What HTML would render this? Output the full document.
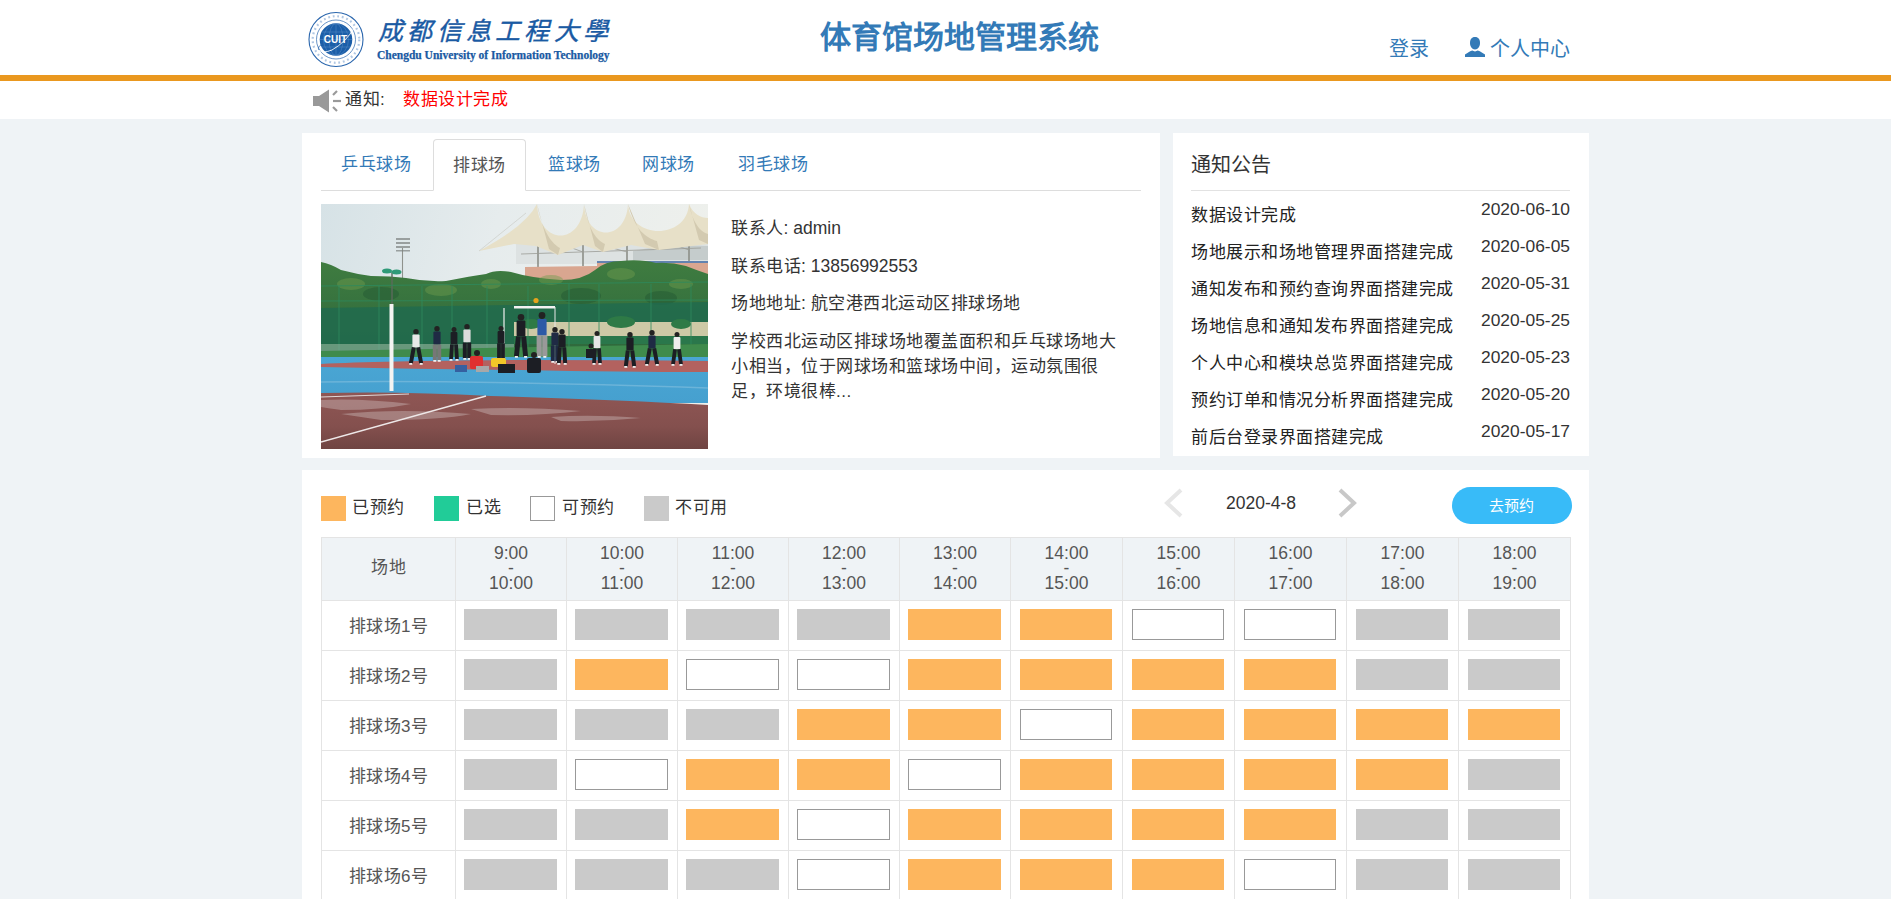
<!DOCTYPE html>
<html lang="zh-CN"><head><meta charset="utf-8">
<style>
*{margin:0;padding:0;box-sizing:border-box}
html,body{width:1891px;height:899px;overflow:hidden}
body{background:#eff3f6;font-family:"Liberation Sans",sans-serif;color:#333;position:relative}
.abs{position:absolute}
.t{position:absolute;white-space:nowrap;line-height:1}
#hdr{left:0;top:0;width:1891px;height:75px;background:#fff}
#oline{left:0;top:75px;width:1891px;height:6px;background:#ea981f}
#notice{left:0;top:81px;width:1891px;height:38px;background:#fff}
.panel{background:#fff}
.tab{position:absolute;top:139px;height:52px;color:#337ab7;font-size:17px;letter-spacing:.5px;line-height:1;white-space:nowrap}
.tab span{position:absolute;top:17px}
.lat{letter-spacing:0;font-size:17.5px}
.act{border:1px solid #ddd;border-bottom-color:#fff;border-radius:4px 4px 0 0;background:#fff;color:#555}
.news{font-size:17px;letter-spacing:.5px;color:#222}
.date{font-size:17.4px;color:#333;text-align:right;width:120px}
table{position:absolute;left:321px;top:537px;border-collapse:collapse;table-layout:fixed}
td,th{border:1px solid #e4e4e4;text-align:center;padding:0;color:#555;font-weight:normal;vertical-align:middle}
th{background:#eff3f6;height:63px;font-size:17.5px;line-height:15px;padding-bottom:2px}
th.nm0{font-size:17px;letter-spacing:.5px;padding-bottom:4px}
td{height:50px;font-size:17px;letter-spacing:.5px}
td.nm{padding-bottom:3px}
.b{display:block;margin:0 0 0 9px;width:92px;height:31px;position:relative;top:-1px}
.c111 .b{margin-left:8px;width:93px}
.G{background:#cacaca}
.O{background:#fdb65e}
.W{background:#fff;border:1px solid #999}
.leg{position:absolute;top:496px;width:25px;height:25px}
.lt{position:absolute;top:499px;font-size:17px;letter-spacing:.5px;line-height:1;color:#333;white-space:nowrap}
</style></head><body>
<div id="hdr" class="abs"></div>
<div id="oline" class="abs"></div>
<div id="notice" class="abs"></div>

<!-- logo -->
<svg class="abs" style="left:306px;top:10px" width="60" height="60" viewBox="0 0 60 60">
<circle cx="30" cy="29.5" r="27" fill="#fff" stroke="#2a66ad" stroke-width="1.1"/>
<circle cx="30" cy="29.5" r="23.3" fill="none" stroke="#4f82c0" stroke-width="2.2" stroke-dasharray="1.8 2.8" opacity="0.45"/>
<circle cx="30" cy="29.5" r="19.5" fill="none" stroke="#2a66ad" stroke-width="0.7"/>
<circle cx="30" cy="29.5" r="16.3" fill="#1b5ea8"/>
<g stroke="#5d8fca" stroke-width="0.45" fill="none"><ellipse cx="30" cy="29.5" rx="7" ry="16"/><ellipse cx="30" cy="29.5" rx="12.5" ry="16"/><line x1="14" y1="29.5" x2="46" y2="29.5"/><line x1="15.5" y1="22" x2="44.5" y2="22"/><line x1="15.5" y1="37" x2="44.5" y2="37"/><line x1="30" y1="13.5" x2="30" y2="45.5"/></g>
<path d="M13 40 Q16 44 26 40 Q40 32 48 18" stroke="#fff" stroke-width="0.9" fill="none"/><path d="M13 40 Q11 37 16 34" stroke="#2a66ad" stroke-width="0.8" fill="none"/>
<text x="29.5" y="33.3" text-anchor="middle" font-family="Liberation Sans" font-weight="bold" font-size="10" fill="#fff">CUIT</text>
</svg>
<div class="t" style="left:378px;top:19px;font-family:'Liberation Serif',serif;font-weight:normal;font-size:25px;color:#1a5aa3;letter-spacing:4.3px;font-style:italic;-webkit-text-stroke:0.4px #1a5aa3">成都信息工程大學</div>
<div class="t" id="eng" style="left:377px;top:50px;font-family:'Liberation Serif',serif;font-weight:bold;font-size:11.5px;color:#1a5aa3;-webkit-text-stroke:0.25px #1a5aa3">Chengdu University of Information Technology</div>

<div class="t" style="left:820px;top:22px;font-size:31px;font-weight:bold;color:#337ab7">体育馆场地管理系统</div>
<div class="t" style="left:1389px;top:39px;font-size:20px;color:#337ab7">登录</div>
<svg class="abs" style="left:1465px;top:37px" width="20" height="20" viewBox="0 0 20 20"><path d="M10 0 C13.5 0 15 2.5 15 6 C15 9.5 13 12.5 10 12.5 C7 12.5 5 9.5 5 6 C5 2.5 6.5 0 10 0Z" fill="#337ab7"/><path d="M0 20 L0 17.6 L5.2 14.3 L7.2 13.6 Q10 15.2 12.8 13.6 L14.8 14.3 L20 17.6 L20 20Z" fill="#337ab7"/></svg>
<div class="t" style="left:1490px;top:39px;font-size:20px;color:#337ab7">个人中心</div>

<!-- notice -->
<svg class="abs" style="left:312px;top:89px" width="30" height="24" viewBox="0 0 30 24"><path d="M1 7 L7 7 L17 0.5 L17 23.5 L7 17 L1 17Z" fill="#999"/><g stroke="#999" stroke-width="2.2"><line x1="21" y1="6" x2="25" y2="2"/><line x1="21" y1="12" x2="29" y2="12"/><line x1="21" y1="18" x2="25" y2="22"/></g></svg>
<div class="t" style="left:345px;top:91px;font-size:17px;letter-spacing:.5px;color:#333">通知:</div>
<div class="t" style="left:403px;top:91px;font-size:17px;letter-spacing:.5px;color:#f00">数据设计完成</div>

<!-- panels -->
<div class="abs panel" style="left:302px;top:133px;width:858px;height:325px"></div>
<div class="abs panel" style="left:1173px;top:133px;width:416px;height:323px"></div>
<div class="abs panel" style="left:302px;top:470px;width:1287px;height:429px"></div>

<!-- tabs -->
<div class="abs" style="left:321px;top:190px;width:820px;height:1px;background:#ddd"></div>
<div class="tab" style="left:341px"><span>乒乓球场</span></div>
<div class="tab act" style="left:433px;width:93px"><span style="left:19px">排球场</span></div>
<div class="tab" style="left:548px"><span>篮球场</span></div>
<div class="tab" style="left:642px"><span>网球场</span></div>
<div class="tab" style="left:738px"><span>羽毛球场</span></div>

<div class="abs" style="left:321px;top:204px;width:387px;height:245px;overflow:hidden"><svg width="387" height="245" viewBox="0 0 387 245">
<defs>
<linearGradient id="sky" x1="0" y1="0" x2="1" y2="0.2"><stop offset="0" stop-color="#d6e2e6"/><stop offset="0.45" stop-color="#e6eced"/><stop offset="1" stop-color="#eef0ec"/></linearGradient>
<linearGradient id="trk" x1="0" y1="0" x2="0" y2="1"><stop offset="0" stop-color="#8f5654"/><stop offset="0.6" stop-color="#84504e"/><stop offset="1" stop-color="#6f4442"/></linearGradient>
<linearGradient id="crt" x1="0" y1="0" x2="0" y2="1"><stop offset="0" stop-color="#4aa6d4"/><stop offset="1" stop-color="#46a0cf"/></linearGradient>
<linearGradient id="tree" x1="0" y1="0" x2="0" y2="1"><stop offset="0" stop-color="#3f7c40"/><stop offset="1" stop-color="#2c663c"/></linearGradient>
</defs>
<rect width="387" height="245" fill="url(#sky)"/>
<!-- under-canopy structure -->
<rect x="195" y="36" width="192" height="24" fill="#dde2e2"/>
<path d="M312 47 Q350 40 387 42 L387 56 L312 56Z" fill="#c5cccc"/>
<g stroke="#8c8f88" stroke-width="1.6"><line x1="217" y1="42" x2="217" y2="68"/><line x1="262" y1="40" x2="262" y2="62"/><line x1="306" y1="36" x2="306" y2="58"/><line x1="368" y1="33" x2="368" y2="59"/></g>
<g stroke="#9a9c96" stroke-width="0.8"><line x1="200" y1="50" x2="380" y2="44"/><line x1="240" y1="40" x2="262" y2="48"/><line x1="284" y1="42" x2="306" y2="48"/><line x1="345" y1="38" x2="368" y2="46"/></g>
<rect x="276" y="57" width="111" height="3" fill="#6283b0"/>
<path d="M204 63 L276 62 L276 59 L387 59 L387 80 L204 80Z" fill="#d9a690"/>
<!-- canopy -->
<path d="M158 47 Q205 22 216 0 C218 42 261 42 263 0 C265 38 305 38 307 0 C309 36 366 36 368 0 C372 10 380 14 387 14 L387 40 L338 46 L310 41 L282 48 L262 41 L237 51 L215 42 L193 40 Z" fill="#e7e0c8"/>
<path d="M216 0 C222 30 232 40 239 44 L237 51 L228 45Z M263 0 C268 28 276 36 284 40 L282 48 L274 42Z M307 0 C314 26 325 34 336 37 L338 46 L324 40Z M368 0 C372 20 380 28 387 30 L387 40 L378 36Z" fill="#d3cab0"/>
<line x1="158" y1="47" x2="205" y2="9" stroke="#c0c0b8" stroke-width="0.5"/>
<!-- floodlight -->
<line x1="81.5" y1="44" x2="81.5" y2="82" stroke="#8f928c" stroke-width="1.1"/>
<g fill="#7d8280" opacity="0.7"><rect x="75" y="34" width="14" height="2"/><rect x="75" y="38" width="14" height="2"/><rect x="75" y="42" width="14" height="2"/><rect x="75" y="46" width="14" height="1.5"/></g>
<!-- trees -->
<path d="M0 58 Q10 60 20 66 Q35 70 50 72 Q70 72 85 74 Q105 78 125 77 Q150 72 165 70 Q175 65 190 68 Q210 74 240 76 Q262 76 274 66 Q284 57 300 57 Q320 55 335 59 Q350 58 365 62 Q375 66 387 70 L387 160 L0 160Z" fill="url(#tree)"/>
<g fill="#6f9c4e" opacity="0.45"><ellipse cx="30" cy="80" rx="14" ry="6"/><ellipse cx="120" cy="86" rx="16" ry="6"/><ellipse cx="230" cy="76" rx="12" ry="5"/><ellipse cx="300" cy="70" rx="14" ry="6"/><ellipse cx="360" cy="80" rx="12" ry="5"/><ellipse cx="170" cy="80" rx="10" ry="5"/></g>
<g fill="#245a34" opacity="0.5"><ellipse cx="60" cy="90" rx="18" ry="7"/><ellipse cx="260" cy="92" rx="20" ry="8"/><ellipse cx="340" cy="94" rx="16" ry="7"/></g>
<!-- lamp -->
<line x1="71" y1="68" x2="71" y2="102" stroke="#5c6a5c" stroke-width="1.4"/>
<ellipse cx="66" cy="67" rx="5" ry="2.5" fill="#2f9a78"/><ellipse cx="75.5" cy="68" rx="5" ry="2.5" fill="#2f9a78"/>
<!-- lower fence dark -->
<path d="M0 104 L387 98 L387 140 L0 140Z" fill="#1f6a4f" opacity="0.8"/>
<rect x="193" y="118" width="194" height="16" fill="#cdc9a6"/>
<g fill="#2e7a46"><ellipse cx="210" cy="120" rx="10" ry="5"/><ellipse cx="300" cy="118" rx="14" ry="6"/><ellipse cx="360" cy="120" rx="10" ry="5"/></g>
<rect x="193" y="132" width="194" height="8" fill="#2a774b"/>
<g stroke="#2d8a5e" stroke-width="0.8">
<line x1="0" y1="82" x2="387" y2="78"/><line x1="0" y1="97" x2="387" y2="96"/>
<line x1="18" y1="82" x2="18" y2="150"/><line x1="58" y1="82" x2="58" y2="150"/><line x1="101" y1="82" x2="101" y2="150"/><line x1="131" y1="82" x2="131" y2="150"/><line x1="166" y1="82" x2="166" y2="150"/><line x1="207" y1="82" x2="207" y2="150"/><line x1="248" y1="80" x2="248" y2="150"/><line x1="278" y1="80" x2="278" y2="150"/><line x1="330" y1="80" x2="330" y2="150"/><line x1="370" y1="80" x2="370" y2="150"/>
</g>
<rect x="0" y="140" width="193" height="8" fill="#8fb8a6" opacity="0.6"/>
<!-- turf -->
<path d="M0 147 L387 140 L387 155 L0 153Z" fill="#3f8b4c"/>
<!-- court -->
<rect x="0" y="153" width="387" height="46" fill="url(#crt)"/>
<path d="M0 160 Q60 157 200 156 Q300 156 387 157 L387 168 Q300 168 200 166 Q100 165 0 163Z" fill="#b3625f"/>
<path d="M0 178 Q150 176 387 184" stroke="#8fc6e2" stroke-width="1.5" fill="none" opacity="0.5"/>
<!-- track -->
<path d="M0 189 Q80 187 170 192 Q300 196 387 201 L387 245 L0 245Z" fill="url(#trk)"/>
<g fill="#dcd2d2" opacity="0.35"><path d="M0 196 Q40 194 90 200 Q60 206 20 206 Q5 204 0 203Z"/><path d="M20 210 Q80 204 150 210 Q120 216 60 216Z"/><path d="M150 205 Q200 202 260 207 Q220 212 170 211Z"/><path d="M230 213 Q270 210 320 214 Q280 218 240 217Z"/></g>
<path d="M0 238 L165 192" stroke="#eee8e8" stroke-width="1.3"/>
<path d="M0 193 L88 190" stroke="#e0d8d8" stroke-width="1"/>
<!-- net -->
<rect x="193" y="102" width="41" height="2.5" fill="#f2f2f2"/>
<line x1="234" y1="103" x2="234" y2="160" stroke="#e8e8e8" stroke-width="1"/>
<line x1="183" y1="104" x2="183" y2="158" stroke="#f0f0f0" stroke-width="1.2"/>
<!-- pole -->
<rect x="68.5" y="100" width="4" height="87" fill="#f4f4f2"/>
<circle cx="95.0" cy="127.7" r="2.7" fill="#222"/><rect x="91.4" y="130.4" width="7.2" height="13.0" rx="1" fill="#e8e8e8"/><path d="M92.8 143.4 L89.8 159.5 M97.2 143.4 L100.2 159.5" stroke="#1c1e24" stroke-width="4.0" fill="none"/><rect x="88.3" y="159.0" width="3" height="1.8" fill="#eee"/><rect x="98.7" y="159.0" width="3" height="1.8" fill="#eee"/>
<circle cx="116.0" cy="124.7" r="2.7" fill="#222"/><rect x="112.4" y="127.4" width="7.2" height="13.0" rx="1" fill="#1f2a44"/><path d="M113.8 140.4 L113.8 156.5 M118.2 140.4 L118.2 156.5" stroke="#777" stroke-width="4.0" fill="none"/><rect x="112.3" y="156.0" width="3" height="1.8" fill="#eee"/><rect x="116.7" y="156.0" width="3" height="1.8" fill="#eee"/>
<circle cx="133.0" cy="125.5" r="2.5" fill="#222"/><rect x="129.6" y="128.1" width="6.8" height="12.2" rx="1" fill="#1c1e24"/><path d="M131.0 140.3 L130.0 155.5 M135.0 140.3 L136.0 155.5" stroke="#1c1e24" stroke-width="3.8" fill="none"/><rect x="128.5" y="155.0" width="3" height="1.8" fill="#eee"/><rect x="134.5" y="155.0" width="3" height="1.8" fill="#eee"/>
<circle cx="146.0" cy="122.7" r="2.7" fill="#222"/><rect x="142.4" y="125.4" width="7.2" height="13.0" rx="1" fill="#dcdcdc"/><path d="M143.8 138.4 L143.8 154.5 M148.2 138.4 L148.2 154.5" stroke="#1c1e24" stroke-width="4.0" fill="none"/><rect x="142.3" y="154.0" width="3" height="1.8" fill="#eee"/><rect x="146.7" y="154.0" width="3" height="1.8" fill="#eee"/>
<circle cx="180.0" cy="124.5" r="2.5" fill="#222"/><rect x="176.6" y="127.1" width="6.8" height="12.2" rx="1" fill="#1c1e24"/><path d="M178.0 139.3 L178.0 154.5 M182.0 139.3 L182.0 154.5" stroke="#1c1e24" stroke-width="3.8" fill="none"/><rect x="176.5" y="154.0" width="3" height="1.8" fill="#eee"/><rect x="180.5" y="154.0" width="3" height="1.8" fill="#eee"/>
<circle cx="200.0" cy="113.3" r="3.3" fill="#222"/><rect x="195.6" y="116.6" width="8.8" height="15.8" rx="1" fill="#1c1e24"/><path d="M197.4 132.4 L195.4 152.5 M202.6 132.4 L204.6 152.5" stroke="#1c1e24" stroke-width="4.9" fill="none"/><rect x="193.9" y="152.0" width="3" height="1.8" fill="#eee"/><rect x="203.1" y="152.0" width="3" height="1.8" fill="#eee"/>
<circle cx="221.0" cy="111.5" r="3.4" fill="#222"/><rect x="216.4" y="114.9" width="9.2" height="16.6" rx="1" fill="#2c5aa6"/><path d="M218.2 131.5 L218.2 152.5 M223.8 131.5 L223.8 152.5" stroke="#999" stroke-width="5.2" fill="none"/><rect x="216.7" y="152.0" width="3" height="1.8" fill="#eee"/><rect x="222.3" y="152.0" width="3" height="1.8" fill="#eee"/>
<circle cx="234.0" cy="125.7" r="2.7" fill="#222"/><rect x="230.4" y="128.4" width="7.2" height="13.0" rx="1" fill="#1f2a44"/><path d="M231.8 141.4 L231.8 157.5 M236.2 141.4 L236.2 157.5" stroke="#1f2a44" stroke-width="4.0" fill="none"/><rect x="230.3" y="157.0" width="3" height="1.8" fill="#eee"/><rect x="234.7" y="157.0" width="3" height="1.8" fill="#eee"/>
<circle cx="241.0" cy="127.7" r="2.7" fill="#222"/><rect x="237.4" y="130.4" width="7.2" height="13.0" rx="1" fill="#1c1e24"/><path d="M238.8 143.4 L237.8 159.5 M243.2 143.4 L244.2 159.5" stroke="#1c1e24" stroke-width="4.0" fill="none"/><rect x="236.3" y="159.0" width="3" height="1.8" fill="#eee"/><rect x="242.7" y="159.0" width="3" height="1.8" fill="#eee"/>
<circle cx="276.0" cy="129.6" r="2.5" fill="#222"/><rect x="272.6" y="132.1" width="6.8" height="12.2" rx="1" fill="#e6e6e6"/><path d="M274.0 144.3 L273.0 159.5 M278.0 144.3 L279.0 159.5" stroke="#1c1e24" stroke-width="3.8" fill="none"/><rect x="271.5" y="159.0" width="3" height="1.8" fill="#eee"/><rect x="277.5" y="159.0" width="3" height="1.8" fill="#eee"/>
<circle cx="309.0" cy="130.7" r="2.7" fill="#222"/><rect x="305.4" y="133.4" width="7.2" height="13.0" rx="1" fill="#1c1e24"/><path d="M306.8 146.4 L304.8 162.5 M311.2 146.4 L313.2 162.5" stroke="#1c1e24" stroke-width="4.0" fill="none"/><rect x="303.3" y="162.0" width="3" height="1.8" fill="#eee"/><rect x="311.7" y="162.0" width="3" height="1.8" fill="#eee"/>
<circle cx="331.0" cy="128.7" r="2.7" fill="#222"/><rect x="327.4" y="131.4" width="7.2" height="13.0" rx="1" fill="#1f2a44"/><path d="M328.8 144.4 L325.8 160.5 M333.2 144.4 L336.2 160.5" stroke="#1c1e24" stroke-width="4.0" fill="none"/><rect x="324.3" y="160.0" width="3" height="1.8" fill="#eee"/><rect x="334.7" y="160.0" width="3" height="1.8" fill="#eee"/>
<circle cx="356.0" cy="130.6" r="2.5" fill="#222"/><rect x="352.6" y="133.1" width="6.8" height="12.2" rx="1" fill="#eeeeee"/><path d="M354.0 145.3 L352.0 160.5 M358.0 145.3 L360.0 160.5" stroke="#1c1e24" stroke-width="3.8" fill="none"/><rect x="350.5" y="160.0" width="3" height="1.8" fill="#eee"/><rect x="358.5" y="160.0" width="3" height="1.8" fill="#eee"/>
<!-- sitting -->
<circle cx="156" cy="149" r="3" fill="#222"/><rect x="149" y="152" width="13" height="13" rx="2" fill="#e03030"/><rect x="155" y="162" width="13" height="6" fill="#a8a8a8"/>
<rect x="170" y="154" width="15" height="9" rx="2" fill="#f2c628"/><rect x="177" y="160" width="17" height="9" fill="#1c1e24"/>
<rect x="134" y="161" width="12" height="7" fill="#3560a0"/>
<circle cx="213" cy="151" r="3" fill="#222"/><rect x="206" y="154" width="14" height="15" rx="2" fill="#1c1e24"/>
<circle cx="270" cy="142" r="2.5" fill="#222"/><rect x="265" y="145" width="10" height="9" fill="#1c1e24"/>
<circle cx="215" cy="96.5" r="2.6" fill="#e6a31c"/>
</svg>

</div>

<div class="t" style="left:731px;top:220px;font-size:17px;letter-spacing:.5px;color:#333">联系人<span class="lat">: admin</span></div>
<div class="t" style="left:731px;top:258px;font-size:17px;letter-spacing:.5px;color:#333">联系电话<span class="lat">: 13856992553</span></div>
<div class="t" style="left:731px;top:295px;font-size:17px;letter-spacing:.5px;color:#333">场地地址<span class="lat">: </span>航空港西北运动区排球场地</div>
<div class="abs" style="left:731px;top:329px;font-size:17px;letter-spacing:.5px;line-height:25px;color:#333;white-space:nowrap">学校西北运动区排球场地覆盖面积和乒乓球场地大<br>小相当，位于网球场和篮球场中间，运动氛围很<br>足，环境很棒...</div>

<!-- news -->
<div class="t" style="left:1191px;top:155px;font-size:20px;color:#333">通知公告</div>
<div class="abs" style="left:1191px;top:190px;width:379px;height:1px;background:#e2e2e2"></div>
<div class="t news" style="left:1191px;top:207px">数据设计完成</div><div class="t date" style="left:1450px;top:201px">2020-06-10</div>
<div class="t news" style="left:1191px;top:244px">场地展示和场地管理界面搭建完成</div><div class="t date" style="left:1450px;top:238px">2020-06-05</div>
<div class="t news" style="left:1191px;top:281px">通知发布和预约查询界面搭建完成</div><div class="t date" style="left:1450px;top:275px">2020-05-31</div>
<div class="t news" style="left:1191px;top:318px">场地信息和通知发布界面搭建完成</div><div class="t date" style="left:1450px;top:312px">2020-05-25</div>
<div class="t news" style="left:1191px;top:355px">个人中心和模块总览界面搭建完成</div><div class="t date" style="left:1450px;top:349px">2020-05-23</div>
<div class="t news" style="left:1191px;top:392px">预约订单和情况分析界面搭建完成</div><div class="t date" style="left:1450px;top:386px">2020-05-20</div>
<div class="t news" style="left:1191px;top:429px">前后台登录界面搭建完成</div><div class="t date" style="left:1450px;top:423px">2020-05-17</div>


<!-- legend -->
<div class="leg" style="left:321px;background:#fdb65e"></div><div class="lt" style="left:352px">已预约</div>
<div class="leg" style="left:434px;background:#21cc98"></div><div class="lt" style="left:466px">已选</div>
<div class="leg" style="left:530px;border:1px solid #999;background:#fff"></div><div class="lt" style="left:562px">可预约</div>
<div class="leg" style="left:644px;background:#cacaca"></div><div class="lt" style="left:675px">不可用</div>

<svg class="abs" style="left:1162px;top:488px" width="22" height="30" viewBox="0 0 22 30"><path d="M19 2 L5 15 L19 28" stroke="#e6e6e6" stroke-width="4" fill="none"/></svg>
<div class="t" style="left:1226px;top:495px;font-size:17.5px;color:#333">2020-4-8</div>
<svg class="abs" style="left:1337px;top:488px" width="22" height="30" viewBox="0 0 22 30"><path d="M3 2 L17 15 L3 28" stroke="#c8c8c8" stroke-width="4" fill="none"/></svg>
<div class="abs" style="left:1452px;top:487px;width:120px;height:37px;border-radius:19px;background:#38bbf8"></div>
<div class="t" style="left:1489px;top:498px;font-size:15px;color:#fff">去预约</div>

<table><colgroup><col style="width:134px"><col style="width:111px"><col style="width:111px"><col style="width:111px"><col style="width:111px"><col style="width:111px"><col style="width:112px"><col style="width:112px"><col style="width:112px"><col style="width:112px"><col style="width:112px"></colgroup>
<tr><th class="nm0">场地</th><th>9:00<br>-<br>10:00</th><th>10:00<br>-<br>11:00</th><th>11:00<br>-<br>12:00</th><th>12:00<br>-<br>13:00</th><th>13:00<br>-<br>14:00</th><th>14:00<br>-<br>15:00</th><th>15:00<br>-<br>16:00</th><th>16:00<br>-<br>17:00</th><th>17:00<br>-<br>18:00</th><th>18:00<br>-<br>19:00</th></tr>
<tr><td class="nm">排球场1号</td><td class="c111"><i class="b G"></i></td><td class="c111"><i class="b G"></i></td><td class="c111"><i class="b G"></i></td><td class="c111"><i class="b G"></i></td><td class="c111"><i class="b O"></i></td><td><i class="b O"></i></td><td><i class="b W"></i></td><td><i class="b W"></i></td><td><i class="b G"></i></td><td><i class="b G"></i></td></tr>
<tr><td class="nm">排球场2号</td><td class="c111"><i class="b G"></i></td><td class="c111"><i class="b O"></i></td><td class="c111"><i class="b W"></i></td><td class="c111"><i class="b W"></i></td><td class="c111"><i class="b O"></i></td><td><i class="b O"></i></td><td><i class="b O"></i></td><td><i class="b O"></i></td><td><i class="b G"></i></td><td><i class="b G"></i></td></tr>
<tr><td class="nm">排球场3号</td><td class="c111"><i class="b G"></i></td><td class="c111"><i class="b G"></i></td><td class="c111"><i class="b G"></i></td><td class="c111"><i class="b O"></i></td><td class="c111"><i class="b O"></i></td><td><i class="b W"></i></td><td><i class="b O"></i></td><td><i class="b O"></i></td><td><i class="b O"></i></td><td><i class="b O"></i></td></tr>
<tr><td class="nm">排球场4号</td><td class="c111"><i class="b G"></i></td><td class="c111"><i class="b W"></i></td><td class="c111"><i class="b O"></i></td><td class="c111"><i class="b O"></i></td><td class="c111"><i class="b W"></i></td><td><i class="b O"></i></td><td><i class="b O"></i></td><td><i class="b O"></i></td><td><i class="b O"></i></td><td><i class="b G"></i></td></tr>
<tr><td class="nm">排球场5号</td><td class="c111"><i class="b G"></i></td><td class="c111"><i class="b G"></i></td><td class="c111"><i class="b O"></i></td><td class="c111"><i class="b W"></i></td><td class="c111"><i class="b O"></i></td><td><i class="b O"></i></td><td><i class="b O"></i></td><td><i class="b O"></i></td><td><i class="b G"></i></td><td><i class="b G"></i></td></tr>
<tr><td class="nm">排球场6号</td><td class="c111"><i class="b G"></i></td><td class="c111"><i class="b G"></i></td><td class="c111"><i class="b G"></i></td><td class="c111"><i class="b W"></i></td><td class="c111"><i class="b O"></i></td><td><i class="b O"></i></td><td><i class="b O"></i></td><td><i class="b W"></i></td><td><i class="b G"></i></td><td><i class="b G"></i></td></tr>
</table>
</body></html>
